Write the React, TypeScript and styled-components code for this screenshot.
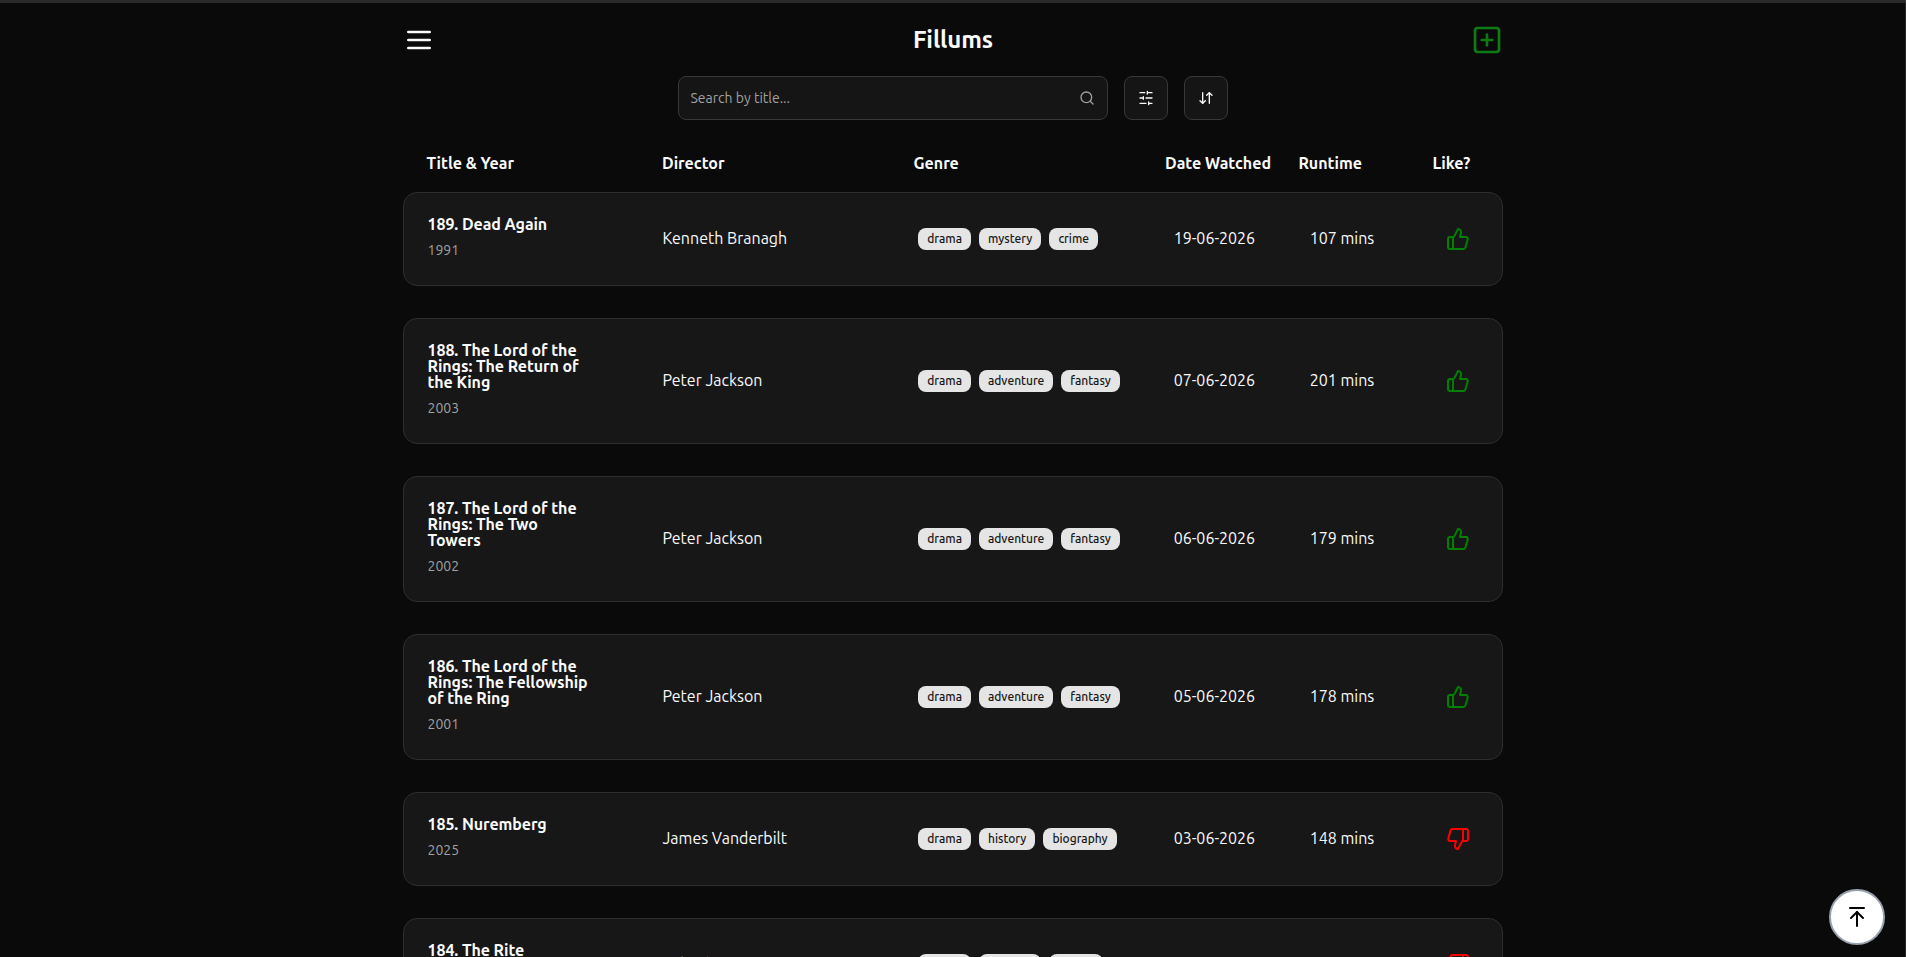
import React from "react";
import styled, { createGlobalStyle } from "styled-components";
import { ArrowDownUp, ArrowUpToLine, SquarePlus, Search, ThumbsUp, ThumbsDown } from "lucide-react";

const Global = createGlobalStyle`
  * { box-sizing: border-box; }
  body {
    margin: 0; height: 957px; overflow: hidden; background: #0a0a0a; color: #fafafa;
    font-family: Ubuntu, "Noto Sans", sans-serif; font-size: 16px; line-height: 24px;
  }
  svg { display: block; }
`;
const Page = styled.div`
  height: 957px;
  overflow: hidden;
  border-top: 3px solid #2b2b2b;
  border-right: 1px solid #2b2b2b;
`;
const Container = styled.main`
  width: 1100px;
  margin: 0 0 0 403px;
`;
const TopBar = styled.header`
  height: 73px;
  display: flex;
  align-items: center;
  justify-content: space-between;
`;
const IconButton = styled.button<{ $color: string }>`
  border: 0;
  padding: 0;
  background: none;
  color: ${(p) => p.$color};
`;
const Brand = styled.h1`
  margin: 0;
  font-size: 24px;
  font-weight: 600;
  letter-spacing: -0.08px;
`;
const Controls = styled.div`
  display: flex;
  justify-content: center;
  gap: 16px;
`;
const SearchField = styled.label`
  width: 430px;
  height: 44px;
  display: flex;
  align-items: center;
  justify-content: space-between;
  padding: 0 12px 0 11.5px;
  border: 1px solid #383838;
  border-radius: 8px;
  background: #151515;
  color: #a1a1a1;
  font-size: 14px;
`;
const ToolButton = styled.button`
  width: 44px;
  height: 44px;
  display: grid;
  place-items: center;
  padding: 0;
  border: 1px solid #383838;
  border-radius: 8px;
  background: #151515;
  color: #fafafa;
`;
const Heads = styled.div`
  display: grid;
  grid-template-columns: 235.5px 251.5px 251.5px 133.5px 134px 1fr;
  padding: 31px 0 17px 23.5px;
  font-weight: 600;
  line-height: 24px;
  white-space: nowrap;
`;
const Head = styled.span``;
const List = styled.div`
  display: flex;
  flex-direction: column;
  gap: 32px;
`;
const Card = styled.article`
  display: grid;
  grid-template-columns: 235px 255.7px 255.5px 136px 136.3px 1fr;
  align-items: center;
  padding: 23px 0 25px 23.5px;
  border: 1px solid #2e2e2e;
  border-radius: 14px;
  background: #171717;
  white-space: nowrap;
`;
const Film = styled.div``;
const FilmTitle = styled.h2`
  margin: 0;
  font-size: 16px;
  line-height: 16px;
  font-weight: 600;
  letter-spacing: -0.075px;
`;
const Year = styled.p`
  margin: 8px 0 0;
  color: #a1a1a1;
  font-size: 14px;
  line-height: 20px;
`;
const Cell = styled.span``;
const Tags = styled.div`
  display: flex;
  gap: 8px;
  padding-top: 2px;
`;
const Tag = styled.span`
  height: 22px;
  padding: 0 9px;
  border-radius: 8px;
  background: #e5e5e5;
  color: #171717;
  font-size: 12px;
  font-weight: 500;
  line-height: 22px;
`;
const Verdict = styled.span`
  padding-top: 2px;
`;
const ToTop = styled.button`
  position: fixed;
  right: 21px;
  bottom: 12px;
  width: 56px;
  height: 56px;
  display: grid;
  place-items: center;
  padding: 0;
  border: 2px solid #99a1af;
  border-radius: 50%;
  background: #fff;
  color: #000;
`;

const MenuIcon = () => (
  <svg width="32" height="32" viewBox="0 0 24 24" fill="none" stroke="currentColor" strokeWidth="2" strokeLinecap="round">
    <path d="M4 6h16M4 12h16M4 18h16" />
  </svg>
);

const SlidersIcon = () => (
  <svg width="16" height="16" viewBox="0 0 24 24" fill="none" stroke="currentColor" strokeWidth="2" strokeLinecap="round">
    <path d="M21 4h-7M10 4H3M21 12h-9M8 12H3M21 20h-5M12 20H3M14 2v4M8 10v4M16 18v4" />
  </svg>
);

const films = [
  { lines: ["189. Dead Again"], year: 1991, director: "Kenneth Branagh", genres: ["drama", "mystery", "crime"], date: "19-06-2026", mins: 107, like: true },
  { lines: ["188. The Lord of the", "Rings: The Return of", "the King"], year: 2003, director: "Peter Jackson", genres: ["drama", "adventure", "fantasy"], date: "07-06-2026", mins: 201, like: true },
  { lines: ["187. The Lord of the", "Rings: The Two", "Towers"], year: 2002, director: "Peter Jackson", genres: ["drama", "adventure", "fantasy"], date: "06-06-2026", mins: 179, like: true },
  { lines: ["186. The Lord of the", "Rings: The Fellowship", "of the Ring"], year: 2001, director: "Peter Jackson", genres: ["drama", "adventure", "fantasy"], date: "05-06-2026", mins: 178, like: true },
  { lines: ["185. Nuremberg"], year: 2025, director: "James Vanderbilt", genres: ["drama", "history", "biography"], date: "03-06-2026", mins: 148, like: false },
  { lines: ["184. The Rite"], year: 2011, director: "Mikael Håfström", genres: ["drama", "mystery", "horror"], date: "02-06-2026", mins: 114, like: false },
];

export default function App() {
  return (
    <Page>
      <Global />
      <Container>
        <TopBar>
          <IconButton $color="#fafafa" aria-label="Menu"><MenuIcon /></IconButton>
          <Brand>Fillums</Brand>
          <IconButton $color="#0f7a14" aria-label="Add film"><SquarePlus size={32} /></IconButton>
        </TopBar>
        <Controls>
          <SearchField>Search by title...<Search size={16} /></SearchField>
          <ToolButton aria-label="Filter"><SlidersIcon /></ToolButton>
          <ToolButton aria-label="Sort"><ArrowDownUp size={16} /></ToolButton>
        </Controls>
        <Heads>
          {["Title & Year", "Director", "Genre", "Date Watched", "Runtime", "Like?"].map((h) => <Head key={h}>{h}</Head>)}
        </Heads>
        <List>
          {films.map((f) => (
            <Card key={f.year}>
              <Film>
                <FilmTitle>{f.lines.map((l) => <div key={l}>{l}</div>)}</FilmTitle>
                <Year>{f.year}</Year>
              </Film>
              <Cell>{f.director}</Cell>
              <Tags>{f.genres.map((g) => <Tag key={g}>{g}</Tag>)}</Tags>
              <Cell>{f.date}</Cell>
              <Cell>{f.mins} mins</Cell>
              <Verdict>{f.like ? <ThumbsUp color="green" /> : <ThumbsDown color="red" />}</Verdict>
            </Card>
          ))}
        </List>
      </Container>
      <ToTop aria-label="Back to top"><ArrowUpToLine size={24} /></ToTop>
    </Page>
  );
}
